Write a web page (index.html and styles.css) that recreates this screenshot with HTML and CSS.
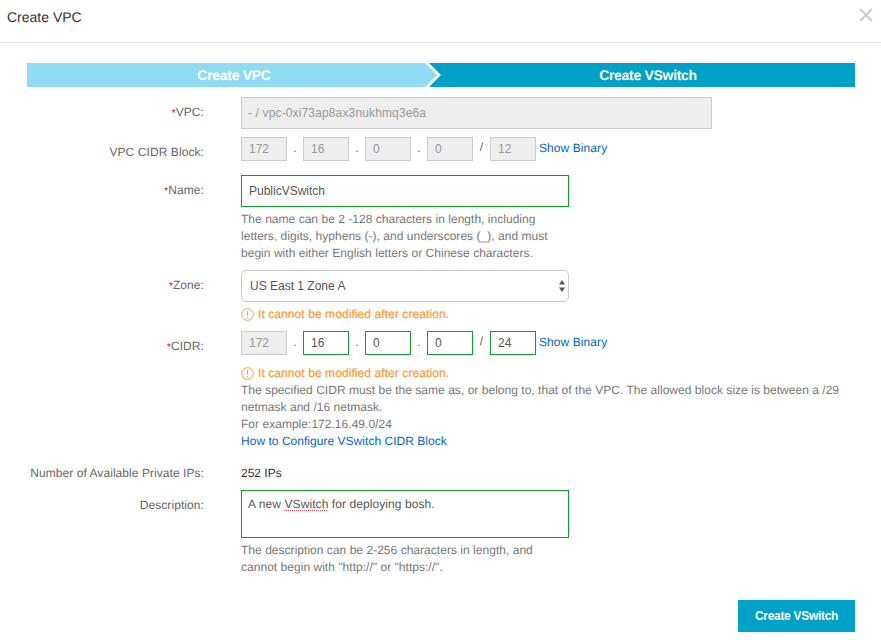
FILE: index.html
```html
<!DOCTYPE html>
<html lang="en">
<head>
    <meta charset="UTF-8">
    <meta name="viewport" content="width=device-width, initial-scale=1.0">
    <title>Create VPC</title>
    <link rel="stylesheet" href="styles.css">
</head>
<body>
    <div class="dialog">
        <div class="dialogHeader">
            <h1>Create VPC</h1>
            <svg class="closeIcon" width="14" height="14" viewBox="0 0 14 14">
                <path d="M1 1 L13 13 M13 1 L1 13" stroke="#cccccc" stroke-width="2" fill="none"/>
            </svg>
        </div>

        <div class="dialogBody">
            <div class="steps">
                <div class="step stepDone"><span>Create VPC</span></div>
                <div class="step"><span>Create VSwitch</span></div>
            </div>

            <form id="vswitchForm">
                <div class="field gapSmall">
                    <label class="fieldLabel"><span class="req">*</span>VPC:</label>
                    <input class="textInput wide" type="text" value="- / vpc-0xi73ap8ax3nukhmq3e6a" disabled>
                </div>

                <div class="field gapLarge">
                    <label class="fieldLabel">VPC CIDR Block:</label>
                    <div class="cidr">
                        <input class="cidrPart" type="text" value="172" disabled>
                        <span class="sep">.</span>
                        <input class="cidrPart" type="text" value="16" disabled>
                        <span class="sep">.</span>
                        <input class="cidrPart" type="text" value="0" disabled>
                        <span class="sep">.</span>
                        <input class="cidrPart" type="text" value="0" disabled>
                        <span class="sep slash">/</span>
                        <input class="cidrPart" type="text" value="12" disabled>
                        <a class="binaryLink" href="#">Show Binary</a>
                    </div>
                </div>

                <div class="field gapMid">
                    <label class="fieldLabel"><span class="req">*</span>Name:</label>
                    <div class="fieldBody">
                        <input class="textInput valid" type="text" value="PublicVSwitch">
                        <div class="help">The name can be 2 -128 characters in length, including<br>letters, digits, hyphens (-), and underscores (_), and must<br>begin with either English letters or Chinese characters.</div>
                    </div>
                </div>

                <div class="field gapMid">
                    <label class="fieldLabel"><span class="req">*</span>Zone:</label>
                    <div class="fieldBody">
                        <div class="selectWrap">
                            <select class="zoneSelect">
                                <option>US East 1 Zone A</option>
                            </select>
                            <svg class="selectArrows" width="6" height="12" viewBox="0 0 6 12">
                                <path d="M3 0 L6 4.5 L0 4.5 Z M0 7.5 L6 7.5 L3 12 Z" fill="#555555"/>
                            </svg>
                        </div>
                        <div class="help warn">
                            <svg width="13" height="13" viewBox="0 0 13 13">
                                <circle cx="6.5" cy="6.5" r="5.8" fill="none" stroke="#f7a14a" stroke-width="1"/>
                                <path d="M6.5 3 V7.8 M6.5 9 V10.2" stroke="#f7a14a" stroke-width="1.2" fill="none"/>
                            </svg>
                            It cannot be modified after creation.
                        </div>
                    </div>
                </div>

                <div class="field gapLast">
                    <label class="fieldLabel"><span class="req">*</span>CIDR:</label>
                    <div class="fieldBody full">
                        <div class="cidr">
                            <input class="cidrPart" type="text" value="172" disabled>
                            <span class="sep">.</span>
                            <input class="cidrPart valid" type="text" value="16">
                            <span class="sep">.</span>
                            <input class="cidrPart valid" type="text" value="0">
                            <span class="sep">.</span>
                            <input class="cidrPart valid" type="text" value="0">
                            <span class="sep slash">/</span>
                            <input class="cidrPart valid" type="text" value="24">
                            <a class="binaryLink" href="#">Show Binary</a>
                        </div>
                        <div class="help warn warnCidr">
                            <svg width="13" height="13" viewBox="0 0 13 13">
                                <circle cx="6.5" cy="6.5" r="5.8" fill="none" stroke="#f7a14a" stroke-width="1"/>
                                <path d="M6.5 3 V7.8 M6.5 9 V10.2" stroke="#f7a14a" stroke-width="1.2" fill="none"/>
                            </svg>
                            It cannot be modified after creation.
                        </div>
                        <div class="help flush">The specified CIDR must be the same as, or belong to, that of the VPC. The allowed block size is between a /29<br>netmask and /16 netmask.<br>For example:172.16.49.0/24<br><a href="#">How to Configure VSwitch CIDR Block</a></div>
                    </div>
                </div>

                <div class="field gapMid">
                    <label class="fieldLabel plain">Number of Available Private IPs:</label>
                    <div class="ipCount">252 IPs</div>
                </div>

                <div class="field">
                    <label class="fieldLabel">Description:</label>
                    <div class="fieldBody">
                        <div class="descBox">A new <span class="misspelt">VSwitch</span> for deploying bosh.</div>
                        <div class="help">The description can be 2-256 characters in length, and<br>cannot begin with "http://" or "https://".</div>
                    </div>
                </div>

                <div class="formFooter">
                    <button type="submit">Create VSwitch</button>
                </div>
            </form>
        </div>
    </div>
</body>
</html>
```

FILE: styles.css
```css
/* Basic reset */
* {
    margin: 0;
    padding: 0;
    box-sizing: border-box;
}

body {
    font-family: "Liberation Sans", Arial, sans-serif;
    font-size: 12px;
    line-height: 17px;
    color: #666;
    background-color: #fff;
    text-rendering: geometricPrecision;
}

/* Dialog header */
.dialog {
    width: 881px;
    height: 640px;
    overflow: hidden;
}

.dialogHeader {
    display: flex;
    justify-content: space-between;
    align-items: flex-start;
    height: 43px;
    padding: 9px 8px 0 7px;
    border-bottom: 1px solid #e4e4e4;
}

.dialogHeader h1 {
    font-size: 14px;
    font-weight: normal;
    line-height: 17px;
    color: #333;
}

.closeIcon {
    margin-top: -1px;
}

.dialogBody {
    padding: 20px 26px 0 27px;
}

/* Step bar */
.steps {
    display: flex;
    height: 24px;
    background-color: #00a1c6;
    font-size: 14px;
    font-weight: bold;
    line-height: 24px;
    letter-spacing: -0.3px;
    color: #fff;
    text-align: center;
}

.step {
    flex: 1;
    position: relative;
}

.step span {
    position: relative;
}

.stepDone {
    flex: 0 0 414px;
    background-color: #fff;
    clip-path: polygon(0 0, 402px 0, 100% 50%, 402px 100%, 0 100%);
}

.stepDone::before {
    content: "";
    position: absolute;
    top: 0;
    bottom: 0;
    left: 0;
    right: 4px;
    background-color: #8edbf2;
    clip-path: polygon(0 0, 398px 0, 100% 50%, 398px 100%, 0 100%);
}

/* Form rows */
#vswitchForm {
    margin-top: 10px;
}

.field {
    display: flex;
    align-items: flex-start;
}

.gapSmall {
    margin-bottom: 8px;
}

.gapLarge {
    margin-bottom: 14px;
}

.gapMid {
    margin-bottom: 8px;
}

.gapLast {
    margin-bottom: 15px;
}

.fieldLabel {
    flex: 0 0 177px;
    margin-right: 37px;
    padding-top: 7px;
    text-align: right;
    letter-spacing: 0.08px;
}

.fieldLabel.plain {
    padding-top: 0;
    letter-spacing: 0.06px;
}

.req {
    color: #e4002b;
    font-size: 10px;
}

.fieldBody {
    width: 328px;
}

.fieldBody.full {
    width: 610px;
}

/* Inputs */
input,
select,
.descBox {
    font-family: "Liberation Sans", Arial, sans-serif;
    font-size: 12px;
    color: #555;
    background-color: #fff;
    border: 1px solid #ccc;
    outline: none;
}

input:disabled {
    color: #999;
    background-color: #eee;
    opacity: 1;
}

.textInput {
    display: block;
    width: 328px;
    height: 32px;
    padding: 0 7px;
}

.textInput.wide {
    width: 471px;
    padding: 0 6px;
    letter-spacing: 0.14px;
}

.valid {
    border-color: #0a9e2a;
}

.cidr {
    display: flex;
    align-items: flex-start;
}

.cidrPart {
    width: 46px;
    height: 24px;
    padding: 0 7px;
}

.sep {
    width: 16px;
    padding-top: 3px;
    text-align: center;
}

.slash {
    width: 17px;
    padding-top: 2px;
}

.binaryLink {
    margin-left: 3px;
    padding-top: 3px;
    letter-spacing: 0.08px;
}

a {
    color: #0066c8;
    text-decoration: none;
}

.selectWrap {
    position: relative;
}

.zoneSelect {
    display: block;
    width: 328px;
    height: 32px;
    padding: 0 8px;
    border-radius: 5px;
    appearance: none;
}

.selectArrows {
    position: absolute;
    top: 10px;
    right: 4px;
}

.descBox {
    width: 328px;
    height: 48px;
    padding: 5px 6px;
    border-color: #0a9e2a;
    letter-spacing: 0.08px;
}

.misspelt {
    text-decoration: underline dotted #ea4b5c;
    text-decoration-thickness: 1px;
    text-underline-offset: 2px;
}

/* Help text */
.help {
    margin-top: 4px;
    color: #777;
    letter-spacing: 0.03px;
}

.warn {
    display: flex;
    align-items: center;
    gap: 4px;
    color: #ff9a2e;
    letter-spacing: 0.08px;
    -webkit-text-stroke: 0.2px #ff9a2e;
}

.warnCidr {
    margin-top: 10px;
}

.help.flush {
    margin-top: 0;
}

.ipCount {
    color: #333;
}

/* Footer button */
.formFooter {
    display: flex;
    justify-content: flex-end;
    margin-top: 24px;
}

button {
    width: 117px;
    height: 32px;
    font-family: "Liberation Sans", Arial, sans-serif;
    font-size: 12px;
    font-weight: bold;
    letter-spacing: -0.3px;
    color: #fff;
    background-color: #00a1c6;
    border: none;
    cursor: pointer;
}
```
